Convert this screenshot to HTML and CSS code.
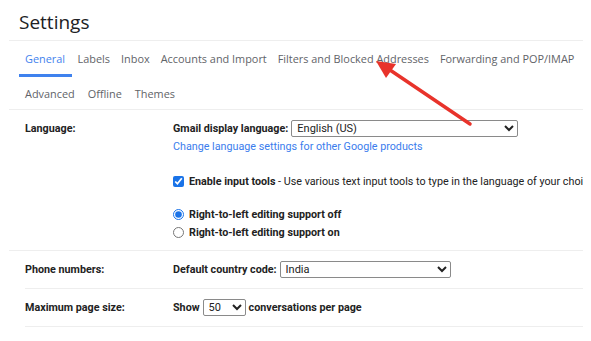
FILE: index.html
```html
<!DOCTYPE html>
<html lang="en">
<head>
    <meta charset="UTF-8">
    <meta name="viewport" content="width=device-width, initial-scale=1.0">
    <title>Settings</title>
    <link rel="stylesheet" href="styles.css">
</head>
<body>
    <div class="page">
        <div class="title">Settings</div>

        <div class="tabs">
            <div class="tab-row">
                <span class="tab active">General</span>
                <span class="tab">Labels</span>
                <span class="tab">Inbox</span>
                <span class="tab">Accounts and Import</span>
                <span class="tab">Filters and Blocked Addresses</span>
                <span class="tab">Forwarding and POP/IMAP</span>
            </div>
            <div class="tab-row second">
                <span class="tab">Advanced</span>
                <span class="tab">Offline</span>
                <span class="tab">Themes</span>
            </div>
        </div>

        <div class="setting first">
            <div class="label">Language:</div>
            <div class="value">
                <div class="line">
                    <b>Gmail display language:</b>
                    <select class="sel lang"><option>English (US)</option></select>
                </div>
                <div class="line"><a class="link" href="#">Change language settings for other Google products</a></div>
                <div class="line gap">
                    <input type="checkbox" checked>
                    <span><b>Enable input tools</b> - Use various text input tools to type in the language of your choice</span>
                </div>
                <div class="line gap2">
                    <input type="radio" name="rtl" checked>
                    <b>Right-to-left editing support off</b>
                </div>
                <div class="line">
                    <input type="radio" name="rtl">
                    <b>Right-to-left editing support on</b>
                </div>
            </div>
        </div>

        <div class="setting">
            <div class="label">Phone numbers:</div>
            <div class="value">
                <div class="line">
                    <b>Default country code:</b>
                    <select class="sel country"><option>India</option></select>
                </div>
            </div>
        </div>

        <div class="setting">
            <div class="label">Maximum page size:</div>
            <div class="value">
                <div class="line">
                    <b>Show</b>
                    <select class="sel size"><option>50</option></select>
                    <b>conversations per page</b>
                </div>
            </div>
        </div>

        <!-- red arrow pointing at the filters tab -->
        <svg class="arrow" width="591" height="341" viewBox="0 0 591 341">
            <line x1="470" y1="124" x2="390" y2="70" stroke="#e8332b" stroke-width="3.5" stroke-linecap="round"/>
            <polygon points="376,61 396,64 386,78" fill="#e8332b"/>
        </svg>
    </div>
</body>
</html>
```

FILE: styles.css
```css
body {
    margin: 0;
    background: #fff;
    font-family: Roboto, "Liberation Sans", sans-serif;
    color: #222;
}

.page {
    position: relative;
    width: 583px;
    height: 341px;
    overflow: hidden;
}

.title {
    margin-left: 9px;
    padding: 9px 0 0 10px;
    height: 31px;
    font-family: "Open Sans", sans-serif;
    font-size: 19px;
    color: #202124;
    border-bottom: 1px solid #eeeeee;
}

.tabs {
    margin-left: 9px;
    padding-left: 10px;
    border-bottom: 1px solid #eeeeee;
    font-family: "Open Sans", sans-serif;
    font-size: 10.9px;
    color: #5f6368;
}

.tab-row {
    display: flex;
    height: 35px;
}

.tab-row.second {
    height: 33px;
}

.tab {
    padding: 10px 5.5px 0;
    height: 23px;
    white-space: nowrap;
}

.second .tab {
    padding: 10px 6.5px 0;
}

.second .tab:first-child {
    padding-left: 6px;
}

.tab.active {
    color: #3f82ee;
    border-bottom: 3px solid #3f82ee;
    padding: 10px 7px 0 6px;
}

.setting {
    display: flex;
    margin-left: 25px;
    padding: 9px 0;
    border-bottom: 1px solid #eeeeee;
    font-size: 10.75px;
}

.setting.first {
    margin-left: 9px;
    padding-left: 16px;
}

.label {
    width: 148px;
    flex: none;
    font-weight: bold;
    line-height: 19px;
}

.value {
    flex: 1;
    white-space: nowrap;
}

.line {
    display: flex;
    align-items: center;
    gap: 3px;
    height: 18px;
}

.line.gap {
    margin-top: 17px;
}

.line.gap2 {
    margin-top: 15px;
}

.line input {
    width: 11px;
    height: 11px;
    margin: 0 2px 0 0;
    accent-color: #1a73e8;
}

.link {
    color: #3b7ded;
    text-decoration: none;
}

.sel {
    height: 17px;
    padding: 0 1px;
    font-family: Roboto, sans-serif;
    font-size: 11px;
    color: #222;
    background: #fff;
    border: 1px solid #8a8a8a;
    border-radius: 2px;
}

.lang {
    width: 227px;
}

.country {
    width: 171px;
}

.size {
    width: 43px;
}

.arrow {
    position: absolute;
    left: 0;
    top: 0;
    pointer-events: none;
}
```
